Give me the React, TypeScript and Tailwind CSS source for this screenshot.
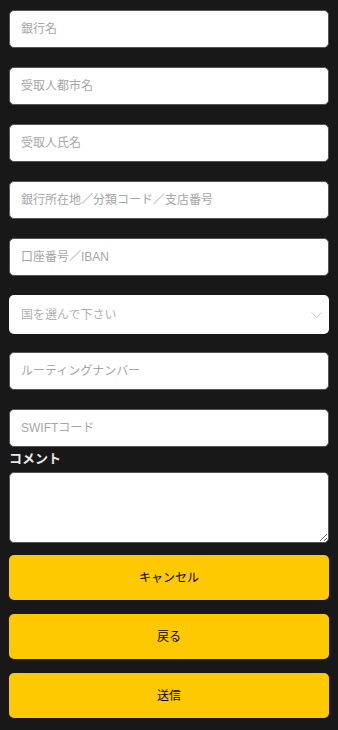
import React from "react";

const font = { fontFamily: '"Liberation Sans", "Noto Sans CJK JP", sans-serif' };

function Field({ placeholder }: { placeholder: string }) {
  return (
    <input
      type="text"
      placeholder={placeholder}
      className="block w-full h-[38px] mb-[19px] rounded-[5px] border border-[#555] bg-white px-[11px] text-[12px] text-black placeholder:text-[#a6a6a6] outline-none"
    />
  );
}

export default function App() {
  return (
    <div className="min-h-[730px] w-full bg-[#181818] px-[9px] pt-[10px] pb-[12px]" style={font}>
      <Field placeholder="銀行名" />
      <Field placeholder="受取人都市名" />
      <Field placeholder="受取人氏名" />
      <Field placeholder="銀行所在地／分類コード／支店番号" />
      <Field placeholder="口座番号／IBAN" />
      <div className="flex items-center justify-between h-[39px] mb-[18px] rounded-[5px] bg-white pl-[12px] pr-[7px]">
        <span className="text-[12px] text-[#b0b0b0]">国を選んで下さい</span>
        <svg width="11" height="6" viewBox="0 0 11 6" fill="none">
          <path d="M0.5 0.5 L5.5 5.5 L10.5 0.5" stroke="#cfcfcf" strokeWidth="1" />
        </svg>
      </div>
      <Field placeholder="ルーティングナンバー" />
      <input
        type="text"
        placeholder="SWIFTコード"
        className="block w-full h-[38px] rounded-[5px] border border-[#555] bg-white px-[11px] text-[12px] text-black placeholder:text-[#a6a6a6] outline-none"
      />
      <label className="block mt-[2px] mb-[4px] text-[13px] font-bold leading-[19px] text-[#e8e8e8]">
        コメント
      </label>
      <textarea className="block w-full h-[71px] rounded-[5px] border border-[#555] bg-white px-[11px] py-[6px] text-[12px] outline-none" />
      <div className="mt-[12px] flex flex-col gap-[14px]">
        <button className="h-[45px] w-full rounded-[5px] bg-[#ffc900] text-[12px] text-black">キャンセル</button>
        <button className="h-[45px] w-full rounded-[5px] bg-[#ffc900] text-[12px] text-black">戻る</button>
        <button className="h-[45px] w-full rounded-[5px] bg-[#ffc900] text-[12px] text-black">送信</button>
      </div>
    </div>
  );
}
